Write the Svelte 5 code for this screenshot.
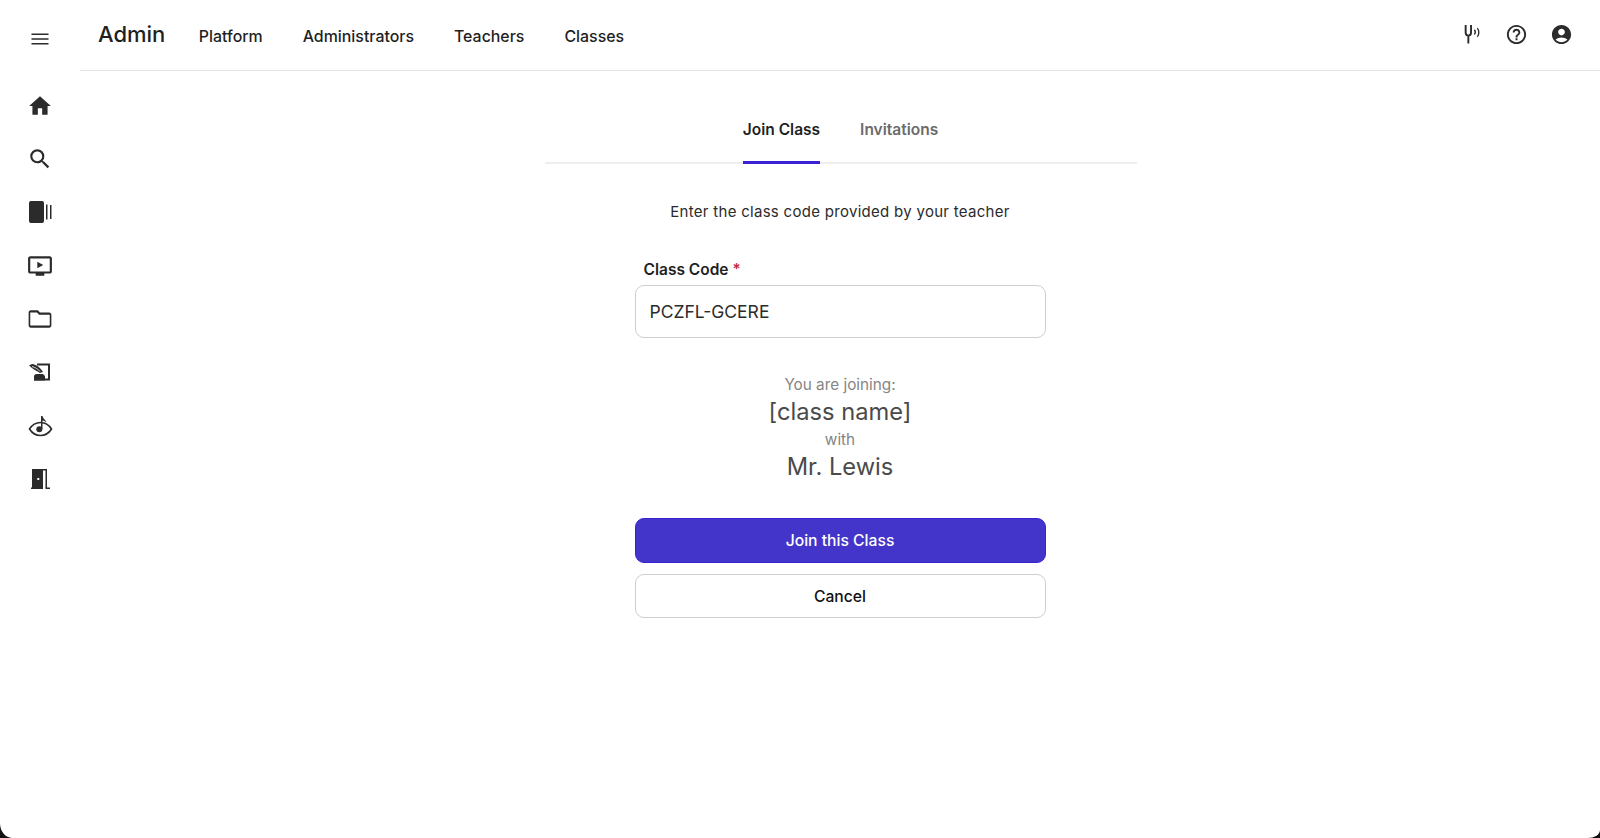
<script>
  const nav = ['Platform', 'Administrators', 'Teachers', 'Classes'];
</script>

<div class="shell">
  <aside class="rail">
    <button class="menu" aria-label="Menu">
      <svg viewBox="0 0 24 24" class="ic"><path d="M3.500 17.500h17v-1.500h-17zm0-4.800h17v-1.500h-17zM3.500 6.500v1.500h17V6.500z"/></svg>
    </button>
    <nav class="rail-items">
      <svg viewBox="0 0 24 24" class="ri"><path d="M10 20v-6h4v6h5v-8h3L12 3 2 12h3v8z"/></svg>
      <svg viewBox="0 0 24 24" class="ri"><path d="M15.500 14h-.79l-.28-.27A6.471 6.471 0 0 0 16 9.500 6.500 6.500 0 1 0 9.500 16c1.610 0 3.090-.59 4.230-1.570l.27.28v.79l5 4.990L20.490 19l-4.990-5zm-6 0C7.010 14 5 11.990 5 9.500S7.010 5 9.500 5 14 7.010 14 9.500 11.990 14 9.500 14z"/></svg>
      <svg viewBox="0 0 26 26" class="ri"><rect x="2" y="2" width="15" height="22" rx="2"/><rect x="19" y="5.500" width="1.500" height="15"/><rect x="23" y="6" width="1.500" height="14"/></svg>
      <svg viewBox="0 0 24 24" class="ri"><path d="M21 3H3c-1.100 0-2 .9-2 2v12c0 1.100.9 2 2 2h5v2h8v-2h5c1.100 0 2-.9 2-2V5c0-1.100-.9-2-2-2zm0 14H3V5h18v12z"/><path d="M9.500 8v6l5.500-3z"/></svg>
      <svg viewBox="0 0 24 24" class="ri"><path d="M9.170 6l2 2H21v10H3V6h6.170M10 4H3.500c-1.100 0-2 .9-2 2v12c0 1.100.9 2 2 2h17c1.100 0 2-.9 2-2V8c0-1.100-.9-2-2-2H12l-2-2z"/></svg>
      <svg viewBox="0 0 26 26" class="ri"><path d="M10 4.500h13v17H7v-2h14V6.500H10z"/><path d="M7 21.500v-4c0-1.500 1-2.500 2.500-2.500H16l2 2v4.500z"/><path d="M2 6.500l3-1.500c4 .5 8 3 11 8l-3 1C10 12 6 10.500 2 6.500z"/><path d="M5 7.500c3 .8 6 2.500 8 5" stroke="#fff" stroke-width=".8" fill="none"/></svg>
      <svg viewBox="0 0 26 26" class="ri"><path d="M2.500 16c2.500-4 6.500-6.500 11-6.500s8.500 2.500 11 6.500c-2.500 4-6.500 6.500-11 6.500S5 20 2.500 16z" fill="none" stroke="#2b2b2b" stroke-width="1.600"/><circle cx="12.300" cy="16.200" r="3"/><path d="M14 3h1.500c.4 2.500 3.300 3.500 3.800 7-1-1.500-2.300-2.200-3.800-2.500V16H14z"/></svg>
      <svg viewBox="0 0 26 26" class="ri"><path fill-rule="evenodd" d="M5 3h11v20H5zm7.300 9h-2v2h2z"/><path d="M16 3h4v19h-1.500V4.500H16z"/><path d="M4 21.500h2V23H4zM18.500 21.500H23V23h-4.500z"/></svg>
    </nav>
  </aside>

  <div class="body">
    <header class="top">
      <div class="brand">Admin</div>
      <nav class="links">
        {#each nav as n}<span>{n}</span>{/each}
      </nav>
      <div class="actions">
        <svg viewBox="-2.500 0 24 24" class="ai"><path d="M3.400 2v8c0 2 1 3.200 2.800 3.200S9 12 9 10V2M6.200 13v8.500" fill="none" stroke="#2b2b2b" stroke-width="2"/><path d="M12.500 7c1.200 1.500 1.200 3.500 0 5M15.500 5.300c2.200 2.500 2.200 6.500 0 9" fill="none" stroke="#2b2b2b" stroke-width="1.400"/></svg>
        <svg viewBox="0 0 24 24" class="ai"><path d="M11 18h2v-2h-2v2zm1-16C6.480 2 2 6.480 2 12s4.480 10 10 10 10-4.480 10-10S17.520 2 12 2zm0 18c-4.410 0-8-3.590-8-8s3.590-8 8-8 8 3.590 8 8-3.590 8-8 8zm0-14c-2.210 0-4 1.790-4 4h2c0-1.100.9-2 2-2s2 .9 2 2c0 2-3 1.750-3 5h2c0-2.250 3-2.500 3-5 0-2.210-1.790-4-4-4z"/></svg>
        <svg viewBox="0 0 24 24" class="ai"><path d="M12 2C6.480 2 2 6.480 2 12s4.480 10 10 10 10-4.480 10-10S17.520 2 12 2zm0 4c1.930 0 3.500 1.570 3.500 3.500S13.930 13 12 13s-3.500-1.570-3.500-3.500S10.070 6 12 6zm0 14c-2.030 0-4.430-.82-6.140-2.880C7.550 15.800 9.680 15 12 15s4.450.8 6.140 2.120C16.430 19.180 14.030 20 12 20z"/></svg>
      </div>
    </header>

    <main class="main">
      <div class="tabs">
        <span class="tab active">Join Class</span>
        <span class="tab">Invitations</span>
      </div>
      <p class="hint">Enter the class code provided by your teacher</p>
      <div class="form">
        <label class="label" for="code">Class Code <b>*</b></label>
        <input id="code" class="input" value="PCZFL-GCERE" />
        <div class="joining">
          <div class="small">You are joining:</div>
          <div class="big">[class name]</div>
          <div class="small">with</div>
          <div class="big">Mr. Lewis</div>
        </div>
        <button class="btn primary">Join this Class</button>
        <button class="btn">Cancel</button>
      </div>
    </main>
  </div>
</div>

<style>
  :global(body) { margin: 0; background: #111; }
  .shell {
    display: flex; height: 838px; overflow: hidden; background: #fff;
    border-radius: 0 0 12px 12px / 0 0 8px 15px;
    font-family: Inter, "Liberation Sans", sans-serif; color: #1f1f1f;
  }
  .ic, .ri, .ai { display: block; flex: none; fill: #2b2b2b; }
  .ic { width: 24px; height: 24px; }
  .ri { width: 26px; height: 26px; }
  .ai { width: 23px; height: 23px; }
  .rail { width: 80px; flex: none; display: flex; flex-direction: column; align-items: center; }
  .menu { border: 0; background: none; padding: 0; margin-top: 26.500px; }
  .rail-items { margin-top: 42px; display: flex; flex-direction: column; gap: 27.400px; }
  .body { flex: 1; display: flex; flex-direction: column; min-width: 0; }
  .top {
    height: 71px; box-sizing: border-box; border-bottom: 1px solid #e4e4e4;
    display: flex; align-items: center; padding: 0 27px 0 18px;
  }
  .brand { font-size: 22px; font-weight: 500; margin-top: -2px; }
  .links { display: flex; gap: 40px; margin-left: 33.500px; font-size: 15.900px; font-weight: 500; margin-top: 2px; }
  .actions { margin-left: auto; display: flex; gap: 22px; margin-top: -1px; }
  .main { display: flex; flex-direction: column; align-items: center; }
  .tabs {
    width: 592px; height: 92.500px; box-sizing: border-box; border-bottom: 2px solid #eee;
    display: flex; justify-content: center; gap: 40px; margin-left: 1px;
  }
  .tab {
    height: 92.500px; box-sizing: border-box; padding-top: 49px; font-size: 15.500px; font-weight: 600; color: #6b6b6b;
  }
  .tab.active { color: #1f1f1f; border-bottom: 3px solid #3a22d4; }
  .hint { margin: 39.500px 0 0; font-size: 15px; line-height: 18px; color: #2b2b2b; letter-spacing: .29px; }
  .form { width: 411px; margin-top: 40px; display: flex; flex-direction: column; }
  .label { font-size: 15.500px; font-weight: 600; line-height: 18px; padding-left: 9px; margin-bottom: 5.500px; }
  .label b { color: #c4223a; font-weight: 500; }
  .input {
    height: 53px; box-sizing: border-box; border: 1px solid #cfcfcf; border-radius: 9px; padding: 0 14px;
    font: 400 17.500px Inter, "Liberation Sans", sans-serif; color: #2b2b2b; background: #fff; outline: none;
  }
  .joining { margin-top: 37px; text-align: center; color: #4a4a4a; }
  .small { font-size: 15.300px; line-height: 20.500px; color: #858585; }
  .big { font-size: 23.700px; line-height: 34.500px; }
  .btn {
    height: 44px; border-radius: 9px; border: 1px solid #cfcfcf; background: #fff; color: #111;
    font: 500 15.700px Inter, "Liberation Sans", sans-serif; margin-bottom: 11px; padding: 1px 0 0;
  }
  .joining + .btn { margin-top: 33px; }
  .primary { background: #4335c9; border-color: #3a22d4; color: #fff; height: 45px; }
</style>
